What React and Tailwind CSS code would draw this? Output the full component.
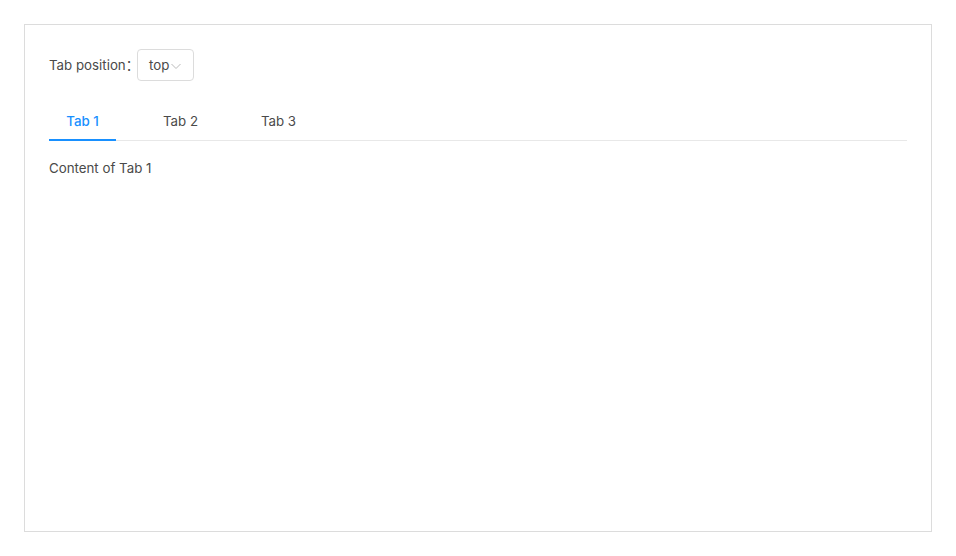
import { useState } from "react"

const tabs = ["Tab 1", "Tab 2", "Tab 3"]

const App = () => {
  const [active, setActive] = useState(0)

  return (
    <div className="w-[956px] h-[556px] bg-white p-6 font-['Inter','Noto_Sans_CJK_SC',sans-serif] text-[13.3px] text-[#4a4a4a]">
      <div className="h-[508px] border border-[#dcdcdc] px-6 pt-6">
        <div className="flex items-center h-8">
          <span className="pt-[2px]">Tab position：</span>
          <button className="ml-[-2px] h-8 flex items-center border border-[#dcdcdc] rounded-[4px] pl-[11px] pr-[11px] pt-[2px] text-[#4a4a4a]">
            top
            <svg width="12" height="12" viewBox="0 0 12 12" className="ml-[1px] -mt-[1px]">
              <path d="M1.5 4l4.5 4.5 4.5-4.5" fill="none" stroke="#bbb" strokeWidth="1" />
            </svg>
          </button>
        </div>
        <div className="mt-[23px] flex border-b border-[#e8e8e8]">
          {tabs.map((t, i) => (
            <button
              key={t}
              onClick={() => setActive(i)}
              className={
                "w-[67px] mr-[31px] h-[37px] flex items-center justify-center border-b-2 -mb-px " +
                (active === i ? "border-[#1890ff] text-[#1890ff] font-medium" : "border-transparent text-[#4a4a4a]")
              }
            >
              {t}
            </button>
          ))}
        </div>
        <div className="mt-[18px]">Content of {tabs[active]}</div>
      </div>
    </div>
  )
}

export default App
